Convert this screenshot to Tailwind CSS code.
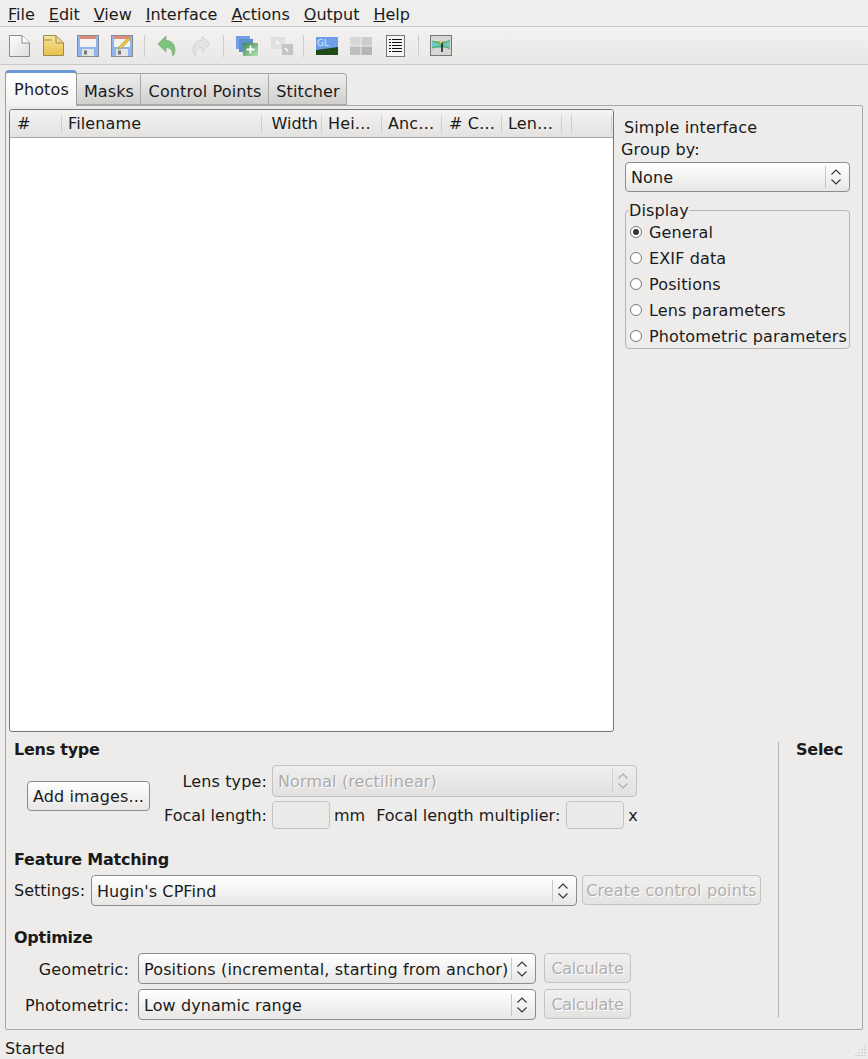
<!DOCTYPE html>
<html lang="en">
<head>
<meta charset="UTF-8">
<title>Hugin</title>
<script src="https://cdn.jsdelivr.net/npm/@tailwindcss/browser@4"></script>
</head>
<body class="w-[868px] h-[1059px] overflow-hidden bg-[#edeceb] text-[#1a1a1a] font-['DejaVu_Sans',sans-serif] text-[16px] tracking-[0.13px] leading-[20px]">

<svg class="hidden">
  <symbol id="updown" viewBox="0 0 12 20"><path d="M1.5 7.5 L6 3 L10.5 7.5 M1.5 12.5 L6 17 L10.5 12.5" fill="none" stroke="#333" stroke-width="1.1"/></symbol>
  <symbol id="updown-off" viewBox="0 0 12 20"><path d="M1.5 7.5 L6 3 L10.5 7.5 M1.5 12.5 L6 17 L10.5 12.5" fill="none" stroke="#aaa" stroke-width="1.1"/></symbol>
  <symbol id="floppy" viewBox="0 0 22 22">
    <rect x="0.5" y="0.5" width="21" height="21" fill="#8fb4ee" stroke="#8a8b8d"/>
    <rect x="3" y="1" width="16" height="11" fill="#f2f2f0"/>
    <rect x="3" y="1" width="16" height="3" fill="#dd8a7c"/>
    <rect x="5" y="14" width="12" height="7" fill="#e4e4e2"/>
    <rect x="7" y="15.5" width="3" height="4" fill="#777"/>
  </symbol>
</svg>

<!-- menu -->
<div class="h-[27px] border-b border-[#c9c8c6] bg-[#efeeed] flex pl-[8px] pt-[5px] gap-[14px] leading-[20px] tracking-normal">
  <span><u>F</u>ile</span>
  <span><u>E</u>dit</span>
  <span><u>V</u>iew</span>
  <span><u>I</u>nterface</span>
  <span><u>A</u>ctions</span>
  <span><u>O</u>utput</span>
  <span><u>H</u>elp</span>
</div>

<!-- toolbar -->
<div class="h-[38px] border-b border-[#c9c8c6] bg-gradient-to-b from-[#f3f2f1] to-[#e9e8e7] relative flex items-center pl-[9px]">
  <svg class="w-[21px] h-[22px] mr-[13px]" viewBox="0 0 21 22"><defs><linearGradient id="wt" x1="0" y1="0" x2="1" y2="1"><stop offset="0" stop-color="#ffffff"/><stop offset="1" stop-color="#dcdcdb"/></linearGradient></defs><path d="M0.5 0.5 H13 L20.5 8 V21.5 H0.5 Z" fill="url(#wt)" stroke="#8a8a88"/><path d="M13 0.5 V8 H20.5" fill="#fff" stroke="#8a8a88"/></svg>
  <svg class="w-[21px] h-[21px] mr-[13px]" viewBox="0 0 21 21"><defs><linearGradient id="yl" x1="0" y1="0" x2="0" y2="1"><stop offset="0" stop-color="#f7e39a"/><stop offset="1" stop-color="#e7c14c"/></linearGradient></defs><path d="M0.5 0.5 H13 L20.5 8 V20.5 H0.5 Z" fill="url(#yl)" stroke="#9a8a55"/><path d="M13 0.5 V8 H20.5 M0.5 5 H9" fill="none" stroke="#9a8a55"/></svg>
  <svg class="w-[22px] h-[22px] mr-[12px]"><use href="#floppy"/></svg>
  <svg class="w-[22px] h-[22px]" viewBox="0 0 22 22"><use href="#floppy" width="22" height="22"/><path d="M8 12 L17 2.5 L19 4.5 L10 13.5 L7.5 14 Z" fill="#eec53c" stroke="#a98a20" stroke-width="0.6"/></svg>
  <div class="w-px h-[22px] bg-[#cfcecc] mx-[11px]"></div>
  <svg class="w-[20px] h-[22px] mr-[14px] ml-[1px]" viewBox="0 0 20 22"><path d="M1 9 L9 1 V5.5 C15 5.5 18 10 18 15 C18 18 17 20 15.5 21 C16 15 13 12.5 9 12.5 V17 Z" fill="#7cc47a" stroke="#8fb08e"/></svg>
  <svg class="w-[20px] h-[22px]" viewBox="0 0 20 22"><path d="M19 9 L11 1 V5.5 C5 5.5 2 10 2 15 C2 18 3 20 4.5 21 C4 15 7 12.5 11 12.5 V17 Z" fill="#e4e4e3" stroke="#d2d2d1"/></svg>
  <div class="w-px h-[22px] bg-[#cfcecc] ml-[12px] mr-[12px]"></div>
  <svg class="w-[22px] h-[20px] mr-[13px]" viewBox="0 0 22 20"><rect x="0" y="0" width="14" height="13" fill="#6e9fe8"/><rect x="3" y="3" width="14" height="13" fill="#5d90c8"/><defs><linearGradient id="gr" x1="0" y1="0" x2="1" y2="1"><stop offset="0" stop-color="#3f8a4c"/><stop offset="1" stop-color="#b8e2b4"/></linearGradient></defs><rect x="7" y="7" width="15" height="13" fill="url(#gr)"/><path d="M14.5 9.5 V17.5 M10.5 13.5 H18.5" stroke="#fff" stroke-width="1.8"/></svg>
  <svg class="w-[22px] h-[20px]" viewBox="0 0 22 20"><rect x="0" y="1" width="14" height="12" fill="#e0e0df"/><rect x="11" y="8" width="11" height="11" fill="#c4c4c3"/><path d="M5 5 L8 8 M14 12 L17 15" stroke="#fff" stroke-width="1.5"/></svg>
  <div class="w-px h-[22px] bg-[#cfcecc] ml-[10px] mr-[12px]"></div>
  <svg class="w-[22px] h-[18px] mr-[12px]" viewBox="0 0 22 18"><rect width="22" height="18" fill="#6e9fe8"/><path d="M0 13 L22 10 V18 H0 Z" fill="#1d4a16"/><text x="1" y="8.5" font-size="9" fill="#dce8fa" font-family="DejaVu Sans">GL</text></svg>
  <svg class="w-[22px] h-[18px] mr-[14px]" viewBox="0 0 22 18"><rect width="10.5" height="8.5" fill="#d8d8d7"/><rect x="11.5" width="10.5" height="8.5" fill="#cdcdcc"/><rect y="9.5" width="10.5" height="8.5" fill="#bfbfbe"/><rect x="11.5" y="9.5" width="10.5" height="8.5" fill="#b6b6b5"/></svg>
  <svg class="w-[19px] h-[22px]" viewBox="0 0 19 22"><rect x="0.5" y="0.5" width="18" height="21" fill="#f4f4f3" stroke="#777"/><path d="M3 4.5 H5 M6 4.5 H16 M3 7.5 H5 M6 7.5 H16 M3 10.5 H5 M6 10.5 H16 M3 13.5 H5 M6 13.5 H16 M3 16.5 H5 M6 16.5 H16" stroke="#111"/></svg>
  <div class="w-px h-[22px] bg-[#cfcecc] ml-[13px] mr-[11px]"></div>
  <svg class="w-[22px] h-[21px]" viewBox="0 0 22 21"><rect x="0.5" y="0.5" width="21" height="20" fill="#d6d6d4" stroke="#777"/><rect x="2" y="6" width="18" height="7" fill="#6fc9c0"/><path d="M2 6 L9 8 H14 L20 5 M2 13 L9 11 H14 L20 14" stroke="#5da04a" fill="none"/><path d="M12 7 L12 17" stroke="#222" stroke-width="1.6"/><circle cx="11" cy="7" r="1.5" fill="#e8c73c"/></svg>
</div>

<!-- tabs -->
<div class="h-[40px] pl-[5px] flex items-end">
  <div class="h-[36px] w-[72px] -mb-px relative z-10 bg-gradient-to-b from-[#ffffff] to-[#f3f2f1] border border-[#9a9a98] border-b-0 border-t-[3px] border-t-[#6c9ad0] rounded-t-[4px] text-center pt-[7px] pl-[1px]">Photos</div>
  <div class="h-[32px] w-[64px] bg-gradient-to-b from-[#ededec] to-[#d0cfcd] border border-[#a9a8a6] border-l-0 text-center pt-[8px] pl-[1px]">Masks</div>
  <div class="h-[32px] w-[128px] bg-gradient-to-b from-[#ededec] to-[#d0cfcd] border border-[#a9a8a6] border-l-0 text-center pt-[8px] pl-[1px]">Control Points</div>
  <div class="h-[32px] w-[78px] bg-gradient-to-b from-[#ededec] to-[#d0cfcd] border border-[#a9a8a6] border-l-0 rounded-tr-[4px] text-center pt-[8px] pl-[1px]">Stitcher</div>
</div>

<!-- pane -->
<div class="ml-[5px] w-[858px] h-[925px] border border-[#a9a8a6] rounded-[2px] pl-[3px] pt-[3px] bg-[#edeceb]">
  <div class="flex h-[623px]">
    <!-- image list -->
    <div class="w-[605px] h-[623px] border border-[#77767a] rounded-[3px] bg-white overflow-hidden">
      <div class="h-[28px] flex items-center bg-gradient-to-b from-[#f4f3f2] to-[#e3e2e1] border-b border-[#a9a8a6] leading-[26px]">
        <div class="w-[52px] h-[18px] flex items-center pl-[7px] border-r border-[#cfcecc]">#</div>
        <div class="w-[200px] h-[18px] flex items-center pl-[6px] border-r border-[#cfcecc]">Filename</div>
        <div class="w-[60px] h-[18px] flex items-center justify-end pr-[3px] border-r border-[#cfcecc] tracking-normal">Width</div>
        <div class="w-[60px] h-[18px] flex items-center pl-[6px] border-r border-[#cfcecc]">Hei…</div>
        <div class="w-[60px] h-[18px] flex items-center pl-[6px] border-r border-[#cfcecc]">Anc…</div>
        <div class="w-[60px] h-[18px] flex items-center pl-[7px] border-r border-[#cfcecc]">#&nbsp;C…</div>
        <div class="w-[60px] h-[18px] flex items-center pl-[6px] border-r border-[#cfcecc]">Len…</div>
        <div class="w-[10px] h-[18px] border-r border-[#cfcecc]"></div>
        <div class="w-[40px] h-[18px] border-r border-[#cfcecc]"></div>
      </div>
    </div>
    <!-- side panel -->
    <div class="w-[236px] relative">
      <div class="ml-[10px] mt-[9px] h-[20px]">Simple interface</div>
      <div class="ml-[7px] mt-[2px] h-[20px]">Group by:</div>
      <div class="ml-[11px] mt-[2px] w-[225px] h-[30px] flex items-center border border-[#8d8c8a] rounded-[4px] bg-gradient-to-b from-white to-[#e8e7e6] pl-[5px]">
        <span class="flex-1 pt-[2px]">None</span>
        <span class="w-px h-[22px] bg-[#c9c8c6]"></span>
        <svg class="w-[12px] h-[20px] ml-[4px] mr-[7px]"><use href="#updown"/></svg>
      </div>
      <fieldset class="ml-[11px] mt-[8px] w-[225px] h-[149px] border border-[#b5b4b2] rounded-[4px] pl-[4px]">
        <legend class="-ml-[1px] h-[20px] leading-[22px]">Display</legend>
        <div class="h-[26px] flex items-center gap-[7px]"><span class="w-[12px] h-[12px] mb-[2px] rounded-full border border-[#77767a] bg-white flex items-center justify-center"><span class="w-[6px] h-[6px] rounded-full bg-[#333]"></span></span>General</div>
        <div class="h-[26px] flex items-center gap-[7px]"><span class="w-[12px] h-[12px] mb-[2px] rounded-full border border-[#77767a] bg-white"></span>EXIF data</div>
        <div class="h-[26px] flex items-center gap-[7px]"><span class="w-[12px] h-[12px] mb-[2px] rounded-full border border-[#77767a] bg-white"></span>Positions</div>
        <div class="h-[26px] flex items-center gap-[7px]"><span class="w-[12px] h-[12px] mb-[2px] rounded-full border border-[#77767a] bg-white"></span>Lens parameters</div>
        <div class="h-[26px] flex items-center gap-[7px] whitespace-nowrap"><span class="w-[12px] h-[12px] mb-[2px] rounded-full border border-[#77767a] bg-white"></span>Photometric parameters</div>
      </fieldset>
    </div>
  </div>

  <!-- bottom -->
  <div class="flex">
    <div class="w-[769px] pl-[5px] pt-[8px]">
      <div class="h-[18px] leading-[20px] font-bold tracking-[-0.25px]">Lens type</div>
      <div class="flex mt-[7px]">
        <div class="ml-[13px] mt-[16px] w-[123px] h-[30px] shrink-0 border border-[#8d8c8a] rounded-[4px] bg-gradient-to-b from-white to-[#e8e7e6] text-center leading-[30px] whitespace-nowrap">Add images...</div>
        <div>
          <div class="flex h-[32px] items-center">
            <span class="w-[117px] text-right pt-[2px]">Lens type:</span>
            <div class="ml-[5px] w-[365px] h-[32px] flex items-center border border-[#c4c3c1] rounded-[4px] bg-gradient-to-b from-[#efeeed] to-[#e2e1e0] pl-[5px] text-[#ababa9] [text-shadow:1px_1px_0_#fff]">
              <span class="flex-1 pt-[2px]">Normal (rectilinear)</span>
              <span class="w-px h-[24px] bg-[#d2d1cf]"></span>
              <svg class="w-[12px] h-[20px] ml-[4px] mr-[7px]"><use href="#updown-off"/></svg>
            </div>
          </div>
          <div class="flex h-[28px] mt-[4px] items-center whitespace-nowrap tracking-normal">
            <span class="w-[117px] text-right pt-[2px]">Focal length:</span>
            <span class="ml-[5px] w-[58px] h-[28px] border border-[#c4c3c1] rounded-[4px] bg-[#ebeae9]"></span>
            <span class="ml-[4px] pt-[2px]">mm</span>
            <span class="ml-[11px] pt-[2px]">Focal length multiplier:</span>
            <span class="ml-[6px] w-[58px] h-[28px] border border-[#c4c3c1] rounded-[4px] bg-[#ebeae9]"></span>
            <span class="ml-[4px] pt-[2px]">x</span>
          </div>
        </div>
      </div>

      <div class="h-[18px] leading-[20px] font-bold tracking-[-0.25px] mt-[21px]">Feature Matching</div>
      <div class="flex mt-[7px] h-[31px]">
        <span class="w-[77px] leading-[31px] tracking-normal">Settings:</span>
        <div class="w-[486px] h-[31px] flex items-center border border-[#8d8c8a] rounded-[4px] bg-gradient-to-b from-white to-[#e8e7e6] pl-[5px]">
          <span class="flex-1 pt-[2px] tracking-[0.08px]">Hugin's CPFind</span>
          <span class="w-px h-[22px] bg-[#c9c8c6]"></span>
          <svg class="w-[12px] h-[20px] ml-[4px] mr-[7px]"><use href="#updown"/></svg>
        </div>
        <div class="ml-[5px] w-[179px] h-[30px] border border-[#c4c3c1] rounded-[4px] bg-gradient-to-b from-[#f1f0ef] to-[#e4e3e2] text-center leading-[30px] text-[#b0afad] [text-shadow:1px_1px_0_#fff] whitespace-nowrap">Create control points</div>
      </div>

      <div class="h-[18px] leading-[20px] font-bold tracking-[-0.25px] mt-[22px]">Optimize</div>
      <div class="flex mt-[7px] h-[31px]">
        <span class="w-[115px] text-right leading-[33px]">Geometric:</span>
        <div class="ml-[9px] w-[398px] h-[31px] flex items-center border border-[#8d8c8a] rounded-[4px] bg-gradient-to-b from-white to-[#e8e7e6] pl-[5px]">
          <span class="flex-1 pt-[2px] whitespace-nowrap">Positions (incremental, starting from anchor)</span>
          <span class="w-px h-[22px] bg-[#c9c8c6]"></span>
          <svg class="w-[12px] h-[20px] ml-[4px] mr-[7px]"><use href="#updown"/></svg>
        </div>
        <div class="ml-[8px] w-[87px] h-[30px] border border-[#c4c3c1] rounded-[4px] bg-gradient-to-b from-[#f1f0ef] to-[#e4e3e2] text-center leading-[30px] tracking-[-0.3px] text-[#b0afad] [text-shadow:1px_1px_0_#fff]">Calculate</div>
      </div>
      <div class="flex mt-[5px] h-[31px]">
        <span class="w-[115px] text-right leading-[33px]">Photometric:</span>
        <div class="ml-[9px] w-[398px] h-[31px] flex items-center border border-[#8d8c8a] rounded-[4px] bg-gradient-to-b from-white to-[#e8e7e6] pl-[5px]">
          <span class="flex-1 pt-[2px] tracking-[0.08px]">Low dynamic range</span>
          <span class="w-px h-[22px] bg-[#c9c8c6]"></span>
          <svg class="w-[12px] h-[20px] ml-[4px] mr-[7px]"><use href="#updown"/></svg>
        </div>
        <div class="ml-[8px] w-[87px] h-[30px] border border-[#c4c3c1] rounded-[4px] bg-gradient-to-b from-[#f1f0ef] to-[#e4e3e2] text-center leading-[30px] tracking-[-0.3px] text-[#b0afad] [text-shadow:1px_1px_0_#fff]">Calculate</div>
      </div>
    </div>
    <div class="w-px h-[275px] mt-[10px] bg-[#b5b4b2]"></div>
    <div class="ml-[17px] pt-[8px] h-[26px] leading-[20px] font-bold tracking-[-0.25px]">Selec</div>
  </div>
</div>

<!-- status -->
<div class="h-[29px] relative pl-[5px] pt-[9px]">Started
  <svg class="absolute right-[2px] bottom-[2px] w-[12px] h-[12px]" viewBox="0 0 12 12"><path d="M10.5 1.5 h1 M7.5 4.5 h1 M10.5 4.5 h1 M4.5 7.5 h1 M7.5 7.5 h1 M10.5 7.5 h1 M1.5 10.5 h1 M4.5 10.5 h1 M7.5 10.5 h1 M10.5 10.5 h1" stroke="#b0afad"/></svg>
</div>
</body>
</html>
